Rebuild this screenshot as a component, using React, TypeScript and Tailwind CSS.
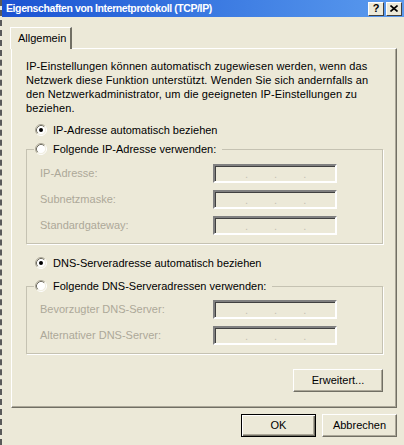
import type { ReactNode } from "react"

function Radio({ checked }: { checked?: boolean }) {
  return (
    <svg width="12" height="12" viewBox="0 0 12 12" className="shrink-0">
      <circle cx="6" cy="6" r="4.5" fill="#ffffff" />
      <path d="M2.11 9.89 A5.5 5.5 0 0 1 9.89 2.11" fill="none" stroke="#ACA899" strokeWidth="1" />
      <path d="M9.89 2.11 A5.5 5.5 0 0 1 2.11 9.89" fill="none" stroke="#ffffff" strokeWidth="1" />
      <path d="M2.82 9.18 A4.5 4.5 0 0 1 9.18 2.82" fill="none" stroke="#716F64" strokeWidth="1" />
      <path d="M9.18 2.82 A4.5 4.5 0 0 1 2.82 9.18" fill="none" stroke="#F1EFE2" strokeWidth="1" />
      {checked && <circle cx="6" cy="6" r="2" fill="#000000" />}
    </svg>
  )
}

function IpField() {
  return (
    <div className="w-[124px] h-[19px] border-2 border-t-[#808080] border-l-[#808080] border-b-white border-r-white shadow-[inset_1px_1px_0_#404040] flex items-end pl-[30px] gap-[26px] text-[#c4c1b4] leading-[14px]">
      <span>.</span>
      <span>.</span>
      <span>.</span>
    </div>
  )
}

function FieldRow({ label }: { label: string }) {
  return (
    <div className="flex items-center h-[19px] pl-[13px]">
      <span className="w-[173px] text-[#ACA899]">{label}</span>
      <IpField />
    </div>
  )
}

function Group({ legend, children, top }: { legend: string; children: ReactNode; top: string }) {
  return (
    <fieldset className={`border border-[#c5c2b2] shadow-[1px_1px_0_#ffffff] flex flex-col gap-[7px] pb-[8px] ${top}`}>
      <legend className="ml-[7px] pl-[1px] pr-[6px] h-[14px] bg-[#ECE9D8]">
        <span className="flex items-center gap-[6px] h-[14px]">
          <Radio />
          <span>{legend}</span>
        </span>
      </legend>
      {children}
    </fieldset>
  )
}

function Button({ children, isDefault }: { children: ReactNode; isDefault?: boolean }) {
  return (
    <div
      className={`w-[75px] h-[23px] flex items-center justify-center ${
        isDefault
          ? "border border-black shadow-[inset_1px_1px_0_#ffffff,inset_-1px_-1px_0_#716F64,inset_-2px_-2px_0_#ACA899]"
          : "border border-t-white border-l-white border-r-[#716F64] border-b-[#716F64] shadow-[inset_-1px_-1px_0_#ACA899]"
      }`}
    >
      {children}
    </div>
  )
}

export default function App() {
  return (
    <div className="w-[404px] h-[445px] overflow-hidden bg-[#ECE9D8] border-l-2 border-dashed border-[#5a5a5a] text-[11px] text-black font-['Liberation_Sans',Arial,sans-serif] flex flex-col">
      {/* title bar */}
      <div className="h-[17px] shrink-0 bg-gradient-to-r from-[#1b52d2] to-[#5b9bee] flex items-center justify-between pl-[4px] pr-[2px]">
        <span className="text-white font-bold text-[10.5px] tracking-[-0.4px] leading-none">
          Eigenschaften von Internetprotokoll (TCP/IP)
        </span>
        <div className="flex gap-[2px]">
          <div className="w-[16px] h-[14px] bg-[#ECE9D8] border border-t-white border-l-white border-r-[#404040] border-b-[#404040] flex items-center justify-center font-bold text-[11px] leading-none">
            ?
          </div>
          <div className="w-[16px] h-[14px] bg-[#ECE9D8] border border-t-white border-l-white border-r-[#404040] border-b-[#404040] flex items-center justify-center">
            <svg width="8" height="7" viewBox="0 0 8 7">
              <path d="M0.5 0.5 L7.5 6.5 M7.5 0.5 L0.5 6.5" stroke="#000" strokeWidth="1.6" />
            </svg>
          </div>
        </div>
      </div>

      {/* tab */}
      <div className="mt-[10px] ml-[8px] w-[62px] h-[22px] -mb-px relative z-10 bg-[#ECE9D8] border-t border-l border-white border-r-2 border-r-[#716F64] flex items-center pl-[7px]">
        Allgemein
      </div>

      {/* tab panel */}
      <div className="ml-[9px] w-[386px] border border-[#716F64] border-t-white border-l-white shadow-[inset_-1px_-1px_0_#ACA899] pt-[10px] pb-[15px] pl-[14px] pr-[13px] flex flex-col">
        <p className="leading-[14px] whitespace-nowrap tracking-[0.1px]">
          IP-Einstellungen können automatisch zugewiesen werden, wenn das
          <br />
          Netzwerk diese Funktion unterstützt. Wenden Sie sich andernfalls an
          <br />
          den Netzwerkadministrator, um die geeigneten IP-Einstellungen zu
          <br />
          beziehen.
        </p>

        <div className="mt-[8px] h-[14px] pl-[9px] flex items-center gap-[6px]">
          <Radio checked />
          <span>IP-Adresse automatisch beziehen</span>
        </div>

        <div className="mt-[5px]">
          <Group legend="Folgende IP-Adresse verwenden:" top="pt-[8px]">
            <FieldRow label="IP-Adresse:" />
            <FieldRow label="Subnetzmaske:" />
            <FieldRow label="Standardgateway:" />
          </Group>
        </div>

        <div className="mt-[12px] h-[14px] pl-[9px] flex items-center gap-[6px]">
          <Radio checked />
          <span>DNS-Serveradresse automatisch beziehen</span>
        </div>

        <div className="mt-[9px]">
          <Group legend="Folgende DNS-Serveradressen verwenden:" top="pt-[7px]">
            <FieldRow label="Bevorzugter DNS-Server:" />
            <FieldRow label="Alternativer DNS-Server:" />
          </Group>
        </div>

        <div className="mt-[15px] flex justify-end">
          <div className="w-[90px] h-[23px] flex items-center justify-center border border-t-white border-l-white border-r-[#716F64] border-b-[#716F64] shadow-[inset_-1px_-1px_0_#ACA899]">
            Erweitert...
          </div>
        </div>
      </div>

      {/* dialog buttons */}
      <div className="mt-[6px] pr-[7px] flex justify-end gap-[6px]">
        <Button isDefault>OK</Button>
        <Button>Abbrechen</Button>
      </div>
    </div>
  )
}
